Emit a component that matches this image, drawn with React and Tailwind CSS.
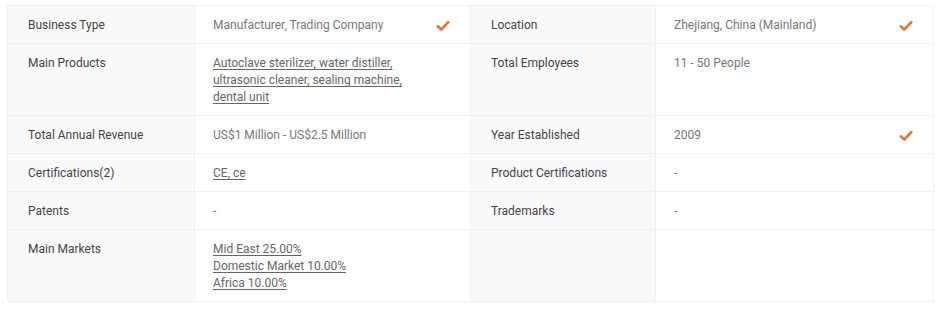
import React from "react";

const Check = () => (
  <svg width="14" height="12" viewBox="0 0 14 12" className="shrink-0">
    <path d="M1.8 6.3 L5.2 9.6 L12.3 2.2" fill="none" stroke="#e8742b" strokeWidth="2.6" strokeLinecap="round" strokeLinejoin="round" />
  </svg>
);

const rows = [
  [
    { label: "Business Type", value: ["Manufacturer, Trading Company"], check: true },
    { label: "Location", value: ["Zhejiang, China (Mainland)"], check: true },
  ],
  [
    { label: "Main Products", value: ["Autoclave sterilizer, water distiller,", "ultrasonic cleaner, sealing machine,", "dental unit"], link: true },
    { label: "Total Employees", value: ["11 - 50 People"] },
  ],
  [
    { label: "Total Annual Revenue", value: ["US$1 Million - US$2.5 Million"] },
    { label: "Year Established", value: ["2009"], check: true },
  ],
  [
    { label: "Certifications(2)", value: ["CE, ce"], link: true },
    { label: "Product Certifications", value: ["-"] },
  ],
  [
    { label: "Patents", value: ["-"] },
    { label: "Trademarks", value: ["-"] },
  ],
  [
    { label: "Main Markets", value: ["Mid East 25.00%", "Domestic Market 10.00%", "Africa 10.00%"], link: true },
    { label: "", value: [] },
  ],
];

function Cell({ item }) {
  return (
    <>
      <div className="bg-[#fafafa] border-b border-r border-[#f0f0f0] pl-[20px] pr-3 pt-[11px] pb-[9px] text-[#444]">
        {item.label}
      </div>
      <div className="bg-white border-b border-r border-[#f0f0f0] pl-[18px] pr-[20px] pt-[11px] pb-[9px] flex justify-between items-start">
        <div className={item.link ? "text-[#666] underline underline-offset-2" : "text-[#777]"}>
          {item.value.map((v, i) => (
            <div key={i}>{v}</div>
          ))}
        </div>
        {item.check && (
          <div className="h-[17px] flex items-center">
            <Check />
          </div>
        )}
      </div>
    </>
  );
}

export default function App() {
  return (
    <div className="w-[940px] h-[311px] bg-white pt-[5px] pl-[7px]" style={{ fontFamily: "Roboto, 'Liberation Sans', sans-serif" }}>
      <div className="grid grid-cols-[187px_276px_185px_278px] border-t border-l border-[#f0f0f0] text-[12px] leading-[17px] w-[926px]">
        {rows.map((r, i) => (
          <React.Fragment key={i}>
            <Cell item={r[0]} />
            <Cell item={r[1]} />
          </React.Fragment>
        ))}
      </div>
    </div>
  );
}
